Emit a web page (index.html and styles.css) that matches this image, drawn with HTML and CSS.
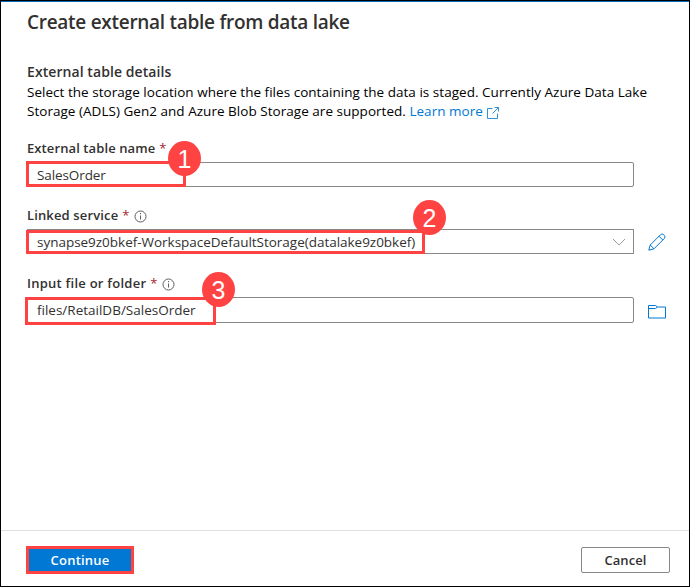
FILE: index.html
```html
<!DOCTYPE html>
<html lang="en">
<head>
<meta charset="utf-8">
<title>Create external table</title>
<link rel="stylesheet" href="styles.css">
</head>
<body>
<div class="panel">
  <main class="content">
    <h1 class="title">Create external table from data lake</h1>
    <h2 class="subtitle">External table details</h2>
    <p class="description">Select the storage location where the files containing the data is staged. Currently Azure Data Lake<br>Storage (ADLS) Gen2 and Azure Blob Storage are supported. <a class="link">Learn more</a><svg class="external" width="12" height="12" viewBox="0 0 12 12"><path d="M5.500 1.500h-5v10h10v-5M7.500 .5h4v4M11.500 .5l-6 6"/></svg></p>

    <section class="field">
      <label class="label"><span class="name-one">External table name</span> <b class="required">*</b></label>
      <div class="row">
        <div class="input"><span class="value-one">SalesOrder</span></div>
        <div class="highlight highlight-one"></div><div class="badge badge-one">1</div>
      </div>
    </section>

    <section class="field field-linked">
      <label class="label"><span class="name-two">Linked service</span> <b class="required">*</b>
        <svg class="info" width="13" height="13" viewBox="0 0 13 13"><circle cx="6.500" cy="6.500" r="5.500"/><path d="M6.500 5.500v4M6.500 3v1.200"/></svg></label>
      <div class="row">
        <div class="input select"><span class="value-two">synapse9z0bkef-WorkspaceDefaultStorage(datalake9z0bkef)</span>
          <svg class="chevron" width="14" height="8" viewBox="0 0 14 8"><path d="M1 1l6 6 6-6"/></svg></div>
        <svg class="action pencil" width="18" height="18" viewBox="0 0 18 18"><path d="M.8 17.200l1.400-5.200L12.500 1.700a2.200 2.200 0 0 1 3.100 0l.7.7a2.200 2.200 0 0 1 0 3.100L6 15.800zM2.200 12L6 15.800M11 3.200l3.800 3.800"/></svg>
        <div class="highlight highlight-two"></div><div class="badge badge-two">2</div>
      </div>
    </section>

    <section class="field">
      <label class="label"><span class="name-three">Input file or folder</span> <b class="required">*</b>
        <svg class="info" width="13" height="13" viewBox="0 0 13 13"><circle cx="6.500" cy="6.500" r="5.500"/><path d="M6.500 5.500v4M6.500 3v1.200"/></svg></label>
      <div class="row">
        <div class="input tall"><span class="value-three">files/RetailDB/SalesOrder</span></div>
        <svg class="action folder" width="18" height="15" viewBox="0 0 18 15"><path d="M.5 14V1.500h7.200L9.500 3h8v11zM.5 4.500h7L9.500 3"/></svg>
        <div class="highlight highlight-three"></div><div class="badge badge-three">3</div>
      </div>
    </section>
  </main>
  <footer class="footer">
    <button class="button primary">Continue</button>
    <button class="button secondary">Cancel</button>
  </footer>
</div>
</body>
</html>
```
FILE: styles.css
```css
* { box-sizing: border-box; }
body { margin: 0; background: #fff; font-family: "Open Sans", "Noto Sans", sans-serif; color: #323130; }
.panel { width: 690px; height: 587px; border: 1px solid #000; box-shadow: inset 0 1px #0068b8; display: flex; flex-direction: column; }
.content { flex: 1; padding: 8px 0 0 26px; }
.title { margin: 0; font-size: 19px; font-weight: 600; line-height: 26px; letter-spacing: -.28px; white-space: nowrap; }
.subtitle { margin: 27px 0 0; font-size: 14px; font-weight: 600; line-height: 19px; letter-spacing: .07px; }
.description { margin: 2px 0 0; color: #000; font-size: 13.5px; line-height: 19px; letter-spacing: .03px; white-space: nowrap; }
.link { color: #0078d4; }
.external { margin-left: 4px; vertical-align: -3px; fill: none; stroke: #3391d9; }
svg { flex: none; }
.field { height: 67px; }
.field-linked { height: 68px; }
.description + .field { margin-top: 16px; }
.label { display: flex; align-items: center; gap: 4px; height: 22px; margin-bottom: 3px; font-size: 13px; font-weight: 600; white-space: nowrap; }
.name-one { letter-spacing: .1px; }
.name-two { letter-spacing: .14px; }
.name-three { letter-spacing: .25px; }
.required { color: #a4262c; font-weight: 400; }
.info { margin: 2px 0 0 1px; fill: none; stroke: #605e5c; }
.row { position: relative; display: flex; align-items: flex-start; height: 26px; }
.input { display: flex; align-items: center; width: 607px; height: 25px; padding: 0 7px 0 9px; border: 1px solid #8a8886; border-radius: 2px; font-size: 13.5px; white-space: nowrap; }
.value-one { letter-spacing: -.1px; }
.value-two { letter-spacing: -.02px; }
.select { border-radius: 0; justify-content: space-between; }
.tall { height: 26px; }
.chevron { fill: none; stroke: #a19f9d; }
.action { margin-left: 14px; fill: none; stroke: #0078d4; }
.pencil { margin-top: 4px; }
.folder { margin-top: 7px; }
.highlight { position: absolute; border: 3px solid #ff4343; }
.highlight-one { left: -1px; top: -1px; width: 160px; height: 26px; }
.highlight-two { left: -1px; top: 1px; width: 399px; height: 24px; }
.highlight-three { left: -2px; top: 0; width: 191px; height: 28px; }
.badge { position: absolute; width: 33px; height: 35px; border-radius: 50%; background: #ff4343; color: #fff; font: 25px/36px "Liberation Sans", sans-serif; text-align: center; }
.badge-one { left: 141px; top: -21px; }
.badge-two { left: 386px; top: -29px; }
.badge-three { left: 175px; top: -25px; }
.footer { height: 56px; border-top: 1px solid #e1dfdd; padding: 15px 19px 0 25px; display: flex; justify-content: space-between; align-items: flex-start; }
.button { padding: 0; font: 600 13px/20px "Open Sans", sans-serif; }
.primary { width: 108px; height: 28px; border: 3px solid #ff4343; background: #0078d4; color: #fff; letter-spacing: .2px; }
.secondary { width: 89px; height: 26px; margin-top: 1px; border: 1px solid #8a8886; border-radius: 2px; background: #fff; color: #323130; letter-spacing: .1px; }
```
